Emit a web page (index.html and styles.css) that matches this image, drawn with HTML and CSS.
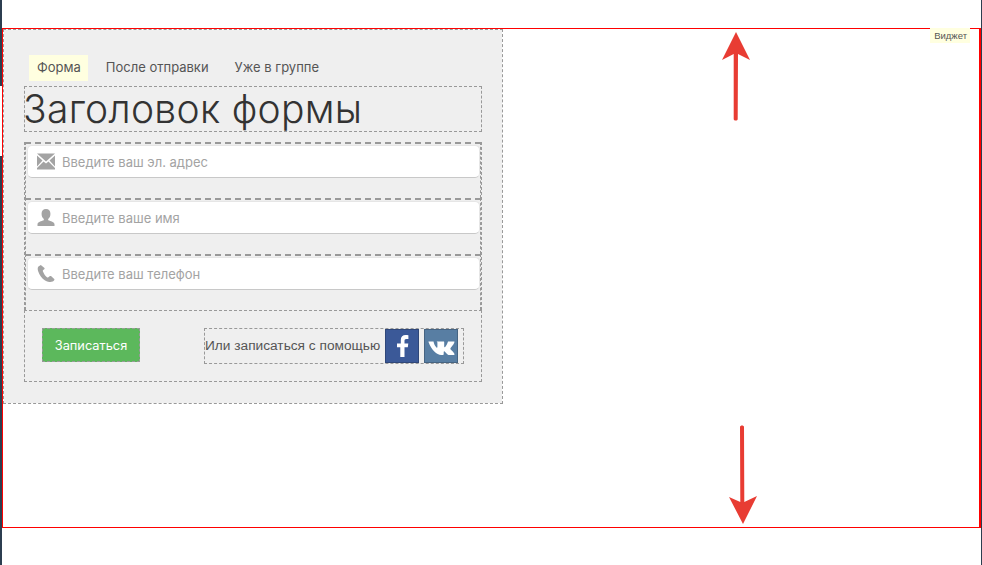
FILE: index.html
```html
<!DOCTYPE html>
<html lang="ru">
<head>
  <meta charset="UTF-8">
  <title>Виджет</title>
  <link rel="stylesheet" href="styles.css">
</head>
<body>
  <div class="sheet">
    <div class="widget">
      <span class="widget-label">Виджет</span>

      <form class="form-box">
        <div class="tabs">
          <a class="tab tab-active">Форма</a>
          <a class="tab">После отправки</a>
          <a class="tab">Уже в группе</a>
        </div>
        <h1 class="form-title">Заголовок формы</h1>

        <div class="fields">
          <div class="field">
            <div class="input">
              <svg class="input-icon" viewBox="0 0 18 16"><path d="M0 0h18L9 8zM0 2l5.500 5L0 13zM18 2v11l-5.500-6zM0 16v-1.500L6.500 8 9 10l2.500-2 6.500 6.500V16z"/></svg>
              <span>Введите ваш эл. адрес</span>
            </div>
          </div>
          <div class="field">
            <div class="input">
              <svg class="input-icon" viewBox="0 0 18 18"><path d="M9 0c3 0 4.700 2.200 4.700 5 0 2.500-1 4.500-2.400 5.500v1.300c2.500 1 6.700 1.800 6.700 4.200v2H0v-2c0-2.400 4.200-3.200 6.700-4.200v-1.300C5.300 9.500 4.300 7.500 4.300 5 4.300 2.200 6 0 9 0z"/></svg>
              <span>Введите ваше имя</span>
            </div>
          </div>
          <div class="field">
            <div class="input">
              <svg class="input-icon" viewBox="0 0 18 18"><path d="M3.500 0 1 1.500C0 2.500 0 4.500.7 6.500c1.300 3.700 3.800 7.700 7.300 10 2.300 1.500 5 1.800 7 1.300 1.500-.4 2.800-1.500 3-2.800l-3.700-3.300c-.5-.3-1-.2-1.500.2l-1.300 1c-.5.300-1 .3-1.500 0-2-1.500-3.500-4-4.300-6.200-.2-.6 0-1 .4-1.300l1-.8c.4-.4.500-.9.300-1.400z"/></svg>
              <span>Введите ваш телефон</span>
            </div>
          </div>
        </div>

        <div class="form-bottom">
          <button type="button" class="submit">Записаться</button>
          <div class="social">
            <span class="social-text">Или записаться с помощью</span>
            <a class="social-btn social-fb">
              <svg viewBox="0 0 34 34" width="34" height="34"><path fill="#fff" d="M19.500 28V18.300h3.300l.5-3.900h-3.800v-2.500c0-1.100.3-1.900 1.900-1.900h2V6.300c-.4-.1-1.500-.2-2.800-.2-2.800 0-4.800 1.700-4.800 4.900v3.400H12v3.900h3.300V28z"/></svg>
            </a>
            <a class="social-btn social-vk">
              <svg viewBox="0 0 34 34" width="34" height="34"><path fill="#fff" d="M4.500 12.500h5c.5 2.500 1.500 4.500 3 6 .4.400.9.200.9-.5v-4.500c0-.5-.5-.6-.8-1h7c.6 0 .6.400.6.900v4c0 .8.500 1 1 .5 1.200-1.400 2.200-3.300 2.800-5.400h6.400c.4 1.800-2.800 5-3.900 6.700-.3.500-.2.800.2 1.200 1.200 1.200 3 2.700 3.800 4.600.2.600-.1.900-.6.900h-5.500c-1.500-.5-2.800-3-3.800-3.500-.5-.2-.9 0-.9.600v2.200c0 .5-.3.700-.8.700h-1.700c-4.500 0-9.600-4.700-12.700-12.900z"/></svg>
            </a>
          </div>
        </div>
      </form>
    </div>

    <div class="side-gap"></div>
    <svg class="arrow arrow-up" viewBox="0 0 32 90"><path fill="#e83c33" d="M16 0 30 28 18 22l-.3 65c0 2-4 2-4 0L13.700 22 2 28z"/></svg>
    <svg class="arrow arrow-down" viewBox="0 0 32 100"><path fill="#e83c33" d="M13 2c0-2 4-2 4 0l.3 75L30 71 16 99 2 72l11.300 5z"/></svg>
  </div>
</body>
</html>
```

FILE: styles.css
```css
* {
  box-sizing: border-box;
}
html, body {
  height: 100%;
}
body {
  margin: 0;
  background: #2c3e50;
  overflow: hidden;
  font-family: Inter, "Open Sans", Arial, sans-serif;
}
.sheet {
  position: relative;
  height: 565px;
  margin: 0 1px 0 2px;
  padding-top: 28px;
  background: #fff;
}
.side-gap {
  position: absolute;
  left: -2px;
  top: 86px;
  width: 2px;
  height: 70px;
  background: #fff;
}
.widget {
  position: relative;
  height: 500px;
  border: 1px solid #f00;
  border-right-width: 2px;
}
.widget-label {
  position: absolute;
  top: -1px;
  right: 9px;
  height: 15px;
  padding: 1px 3px 0 4px;
  background: #ffffe0;
  color: #555;
  font: 9.5px/13px "Liberation Sans", Arial, sans-serif;
}
.form-box {
  width: 500px;
  height: 375px;
  padding: 25px 20px 0 20px;
  background: #efefef;
  background-clip: padding-box;
  border: 1px dashed #999;
}

.tabs {
  display: flex;
  height: 31px;
  padding-left: 5px;
}
.tab {
  height: 26px;
  margin-right: 10px;
  padding: 0 8px;
  color: #555;
  font-size: 13px;
  line-height: 25px;
}
.tab-active {
  padding-right: 7px;
  background: #ffffe0;
}
.form-title {
  height: 46px;
  margin: 0 0 10px;
  border: 1px dashed #999;
  color: #333;
  font-size: 39px;
  font-weight: 300;
  letter-spacing: 0.3px;
  line-height: 44px;
  text-indent: -2px;
  white-space: nowrap;
}

.fields {
  height: 168px;
  border-left: 1px dashed #999;
  border-right: 1px dashed #999;
}
.field {
  height: 56px;
  padding: 1px 0 0 1px;
  border-top: 2px dashed #999;
  border-left: 1px dashed #999;
  border-right: 1px dashed #999;
}
.input {
  display: flex;
  align-items: center;
  height: 33px;
  padding-left: 9px;
  background: #fff;
  border: 1px solid #e6e6e6;
  border-bottom-color: #c8c8c8;
  border-radius: 5px;
  color: #a3a3a3;
  font-size: 13px;
}
.input-icon {
  width: 18px;
  height: 17px;
  margin-right: 7px;
  fill: #a3a3a3;
}

.form-bottom {
  display: flex;
  justify-content: space-between;
  height: 72px;
  padding: 17px 17px 0 17px;
  border: 1px dashed #999;
}
.submit {
  width: 98px;
  height: 34px;
  padding: 0;
  background: #5cb85c;
  border: 1px dashed #999;
  color: #fff;
  font-family: inherit;
  font-size: 12.8px;
}
.social {
  display: flex;
  align-items: center;
  width: 260px;
  height: 36px;
  border: 1px dashed #999;
}
.social-text {
  flex: none;
  width: 176px;
  margin-right: 4px;
  padding-bottom: 2px;
  color: #555;
  font: 13.7px "Liberation Sans", Arial, sans-serif;
  white-space: nowrap;
}
.social-btn {
  flex: none;
  width: 34px;
  height: 34px;
  margin-right: 5px;
  border: 1px solid rgba(0, 0, 0, 0.2);
}
.social-btn svg {
  display: block;
  margin: -1px;
}
.social-fb {
  background: #3b5998;
}
.social-vk {
  background: #587ea3;
}

.arrow {
  position: absolute;
}
.arrow-up {
  left: 718px;
  top: 32px;
  width: 32px;
  height: 90px;
}
.arrow-down {
  left: 725px;
  top: 425px;
  width: 32px;
  height: 100px;
}
```
